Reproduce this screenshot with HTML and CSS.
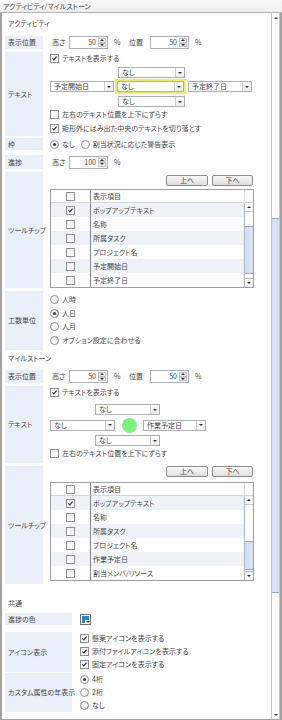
FILE: index.html
```html
<!DOCTYPE html>
<html lang="ja">
<head>
    <meta charset="UTF-8">
    <meta name="viewport" content="width=device-width, initial-scale=1.0">
    <title>アクティビティ/マイルストーン</title>
    <link rel="stylesheet" href="styles.css">
</head>
<body>
    <div class="window">
        <div class="titlebar">アクティビティ/マイルストーン</div>
        <div class="frame">
            <div class="content">

                <!-- Activity -->
                <div class="sect sect-act">アクティビティ</div>

                <div class="row h-pos">
                    <div class="label">表示位置</div>
                    <div class="body inline">
                        <span class="cap">高さ</span>
                        <span class="spin"><span class="val">50</span><span class="spin-btns"><span class="sb"><i class="tri-up"></i></span><span class="sb"><i class="tri-down"></i></span></span></span>
                        <span class="unit">%</span>
                        <span class="cap cap2">位置</span>
                        <span class="spin"><span class="val">50</span><span class="spin-btns"><span class="sb"><i class="tri-up"></i></span><span class="sb"><i class="tri-down"></i></span></span></span>
                        <span class="unit">%</span>
                    </div>
                </div>

                <div class="row h-text1">
                    <div class="label">テキスト</div>
                    <div class="body">
                        <div class="check"><span class="box on"><svg viewBox="0 0 9 9"><path d="M1.8 4.4 L3.6 6.3 L7.2 2.2" /></svg></span>テキストを表示する</div>
                        <div class="combos act-combos">
                            <div class="combo-line indent-act"><span class="combo w67"><span class="txt">なし</span><span class="arr"><i class="tri-down"></i></span></span></div>
                            <div class="combo-line mid-act">
                                <span class="combo w64"><span class="txt">予定開始日</span><span class="arr"><i class="tri-down"></i></span></span>
                                <span class="combo w67 focus"><span class="txt">なし</span><span class="arr"><i class="tri-down"></i></span></span>
                                <span class="combo w64"><span class="txt">予定終了日</span><span class="arr"><i class="tri-down"></i></span></span>
                            </div>
                            <div class="combo-line indent-act low"><span class="combo w67"><span class="txt">なし</span><span class="arr"><i class="tri-down"></i></span></span></div>
                        </div>
                        <div class="check"><span class="box"></span>左右のテキスト位置を上下にずらす</div>
                        <div class="check"><span class="box on"><svg viewBox="0 0 9 9"><path d="M1.8 4.4 L3.6 6.3 L7.2 2.2" /></svg></span>矩形外にはみ出た中央のテキストを切り落とす</div>
                    </div>
                </div>

                <div class="row h-waku">
                    <div class="label">枠</div>
                    <div class="body inline">
                        <span class="radio on"></span><span class="rtext">なし</span>
                        <span class="radio"></span><span class="rtext">割当状況に応じた警告表示</span>
                    </div>
                </div>

                <div class="row h-prog">
                    <div class="label">進捗</div>
                    <div class="body inline">
                        <span class="cap">高さ</span>
                        <span class="spin"><span class="val">100</span><span class="spin-btns"><span class="sb"><i class="tri-up"></i></span><span class="sb"><i class="tri-down"></i></span></span></span>
                        <span class="unit">%</span>
                    </div>
                </div>

                <div class="row h-tip1">
                    <div class="label">ツールチップ</div>
                    <div class="body tips tips-act">
                        <div class="btns"><span class="btn">上へ</span><span class="btn">下へ</span></div>
                        <div class="grid">
                            <div class="gh gcb"><span class="box"></span></div>
                            <div class="gh gtx">表示項目</div>
                            <div class="gh gcorner"></div>
                            <div class="gcb alt"><span class="box on"><svg viewBox="0 0 9 9"><path d="M1.8 4.4 L3.6 6.3 L7.2 2.2" /></svg></span></div>
                            <div class="gtx alt">ポップアップテキスト</div>
                            <div class="gscroll">
                                <span class="gs-btn"><i class="tri-up"></i></span>
                                <span class="gs-track"><span class="gs-thumb thumb-act"></span></span>
                                <span class="gs-btn"><i class="tri-down"></i></span>
                            </div>
                            <div class="gcb"><span class="box"></span></div><div class="gtx">名称</div>
                            <div class="gcb alt"><span class="box"></span></div><div class="gtx alt">所属タスク</div>
                            <div class="gcb"><span class="box"></span></div><div class="gtx">プロジェクト名</div>
                            <div class="gcb alt"><span class="box"></span></div><div class="gtx alt">予定開始日</div>
                            <div class="gcb"><span class="box"></span></div><div class="gtx">予定終了日</div>
                        </div>
                    </div>
                </div>

                <div class="row h-unit">
                    <div class="label">工数単位</div>
                    <div class="body radios">
                        <div class="rline"><span class="radio"></span><span class="rtext">人時</span></div>
                        <div class="rline"><span class="radio on"></span><span class="rtext">人日</span></div>
                        <div class="rline"><span class="radio"></span><span class="rtext">人月</span></div>
                        <div class="rline"><span class="radio"></span><span class="rtext">オプション設定に合わせる</span></div>
                    </div>
                </div>

                <!-- Milestone -->
                <div class="sect sect-ms">マイルストーン</div>

                <div class="row h-pos">
                    <div class="label">表示位置</div>
                    <div class="body inline">
                        <span class="cap">高さ</span>
                        <span class="spin"><span class="val">50</span><span class="spin-btns"><span class="sb"><i class="tri-up"></i></span><span class="sb"><i class="tri-down"></i></span></span></span>
                        <span class="unit">%</span>
                        <span class="cap cap2">位置</span>
                        <span class="spin"><span class="val">50</span><span class="spin-btns"><span class="sb"><i class="tri-up"></i></span><span class="sb"><i class="tri-down"></i></span></span></span>
                        <span class="unit">%</span>
                    </div>
                </div>

                <div class="row h-text2">
                    <div class="label">テキスト</div>
                    <div class="body">
                        <div class="check"><span class="box on"><svg viewBox="0 0 9 9"><path d="M1.8 4.4 L3.6 6.3 L7.2 2.2" /></svg></span>テキストを表示する</div>
                        <div class="combos ms-combos">
                            <div class="combo-line indent-ms"><span class="combo w65"><span class="txt">なし</span><span class="arr"><i class="tri-down"></i></span></span></div>
                            <div class="combo-line mid-ms">
                                <span class="combo w65"><span class="txt">なし</span><span class="arr"><i class="tri-down"></i></span></span>
                                <span class="pointer"></span>
                                <span class="combo w63"><span class="txt">作業予定日</span><span class="arr"><i class="tri-down"></i></span></span>
                            </div>
                            <div class="combo-line indent-ms"><span class="combo w65"><span class="txt">なし</span><span class="arr"><i class="tri-down"></i></span></span></div>
                        </div>
                        <div class="check"><span class="box"></span>左右のテキスト位置を上下にずらす</div>
                    </div>
                </div>

                <div class="row h-tip2">
                    <div class="label">ツールチップ</div>
                    <div class="body tips tips-ms">
                        <div class="btns"><span class="btn">上へ</span><span class="btn">下へ</span></div>
                        <div class="grid">
                            <div class="gh gcb"><span class="box"></span></div>
                            <div class="gh gtx">表示項目</div>
                            <div class="gh gcorner"></div>
                            <div class="gcb alt"><span class="box on"><svg viewBox="0 0 9 9"><path d="M1.8 4.4 L3.6 6.3 L7.2 2.2" /></svg></span></div>
                            <div class="gtx alt">ポップアップテキスト</div>
                            <div class="gscroll">
                                <span class="gs-btn"><i class="tri-up"></i></span>
                                <span class="gs-track"><span class="gs-thumb thumb-ms"></span></span>
                                <span class="gs-btn"><i class="tri-down"></i></span>
                            </div>
                            <div class="gcb"><span class="box"></span></div><div class="gtx">名称</div>
                            <div class="gcb alt"><span class="box"></span></div><div class="gtx alt">所属タスク</div>
                            <div class="gcb"><span class="box"></span></div><div class="gtx">プロジェクト名</div>
                            <div class="gcb alt"><span class="box"></span></div><div class="gtx alt">作業予定日</div>
                            <div class="gcb"><span class="box"></span></div><div class="gtx">割当メンバ/リソース</div>
                        </div>
                    </div>
                </div>

                <!-- Common -->
                <div class="sect sect-common">共通</div>

                <div class="row wide h-color">
                    <div class="label">進捗の色</div>
                    <div class="body inline">
                        <span class="swatch"><span class="swatch-fill"></span><span class="swatch-drop"><i class="tri-down"></i></span></span>
                    </div>
                </div>

                <div class="row wide h-icons">
                    <div class="label">アイコン表示</div>
                    <div class="body lines">
                        <div class="check"><span class="box on"><svg viewBox="0 0 9 9"><path d="M1.8 4.4 L3.6 6.3 L7.2 2.2" /></svg></span>懸案アイコンを表示する</div>
                        <div class="check"><span class="box on"><svg viewBox="0 0 9 9"><path d="M1.8 4.4 L3.6 6.3 L7.2 2.2" /></svg></span>添付ファイルアイコンを表示する</div>
                        <div class="check"><span class="box on"><svg viewBox="0 0 9 9"><path d="M1.8 4.4 L3.6 6.3 L7.2 2.2" /></svg></span>固定アイコンを表示する</div>
                    </div>
                </div>

                <div class="row wide h-year">
                    <div class="label">カスタム属性の年表示</div>
                    <div class="body lines">
                        <div class="rline"><span class="radio on"></span><span class="rtext">4桁</span></div>
                        <div class="rline"><span class="radio"></span><span class="rtext">2桁</span></div>
                        <div class="rline"><span class="radio"></span><span class="rtext">なし</span></div>
                    </div>
                </div>

            </div>

            <!-- Window scrollbar -->
            <div class="vscroll">
                <span class="vs-btn"><i class="tri-up"></i></span>
                <span class="vs-track"><span class="vs-thumb"></span></span>
                <span class="vs-btn"><i class="tri-down"></i></span>
            </div>
        </div>
    </div>
</body>
</html>
```

FILE: styles.css
```css
* {
    box-sizing: border-box;
}
body {
    margin: 0;
    font-family: "Noto Sans CJK JP", "Noto Sans", sans-serif;
    font-size: 7px;
    line-height: 1;
    color: #444;
    font-feature-settings: "palt";
    background: #fff;
}
.window {
    width: 282px;
    height: 720px;
    display: flex;
    flex-direction: column;
    overflow: hidden;
}
.titlebar {
    height: 13px;
    flex: none;
    display: flex;
    align-items: center;
    padding-left: 3px;
    background: linear-gradient(#fbfbfb, #ececec);
    border-bottom: 1px solid #b4b4b4;
    color: #444;
}
.frame {
    flex: 1;
    display: flex;
    border-left: 2px solid #a3a3a3;
    border-right: 2px solid #a3a3a3;
    border-bottom: 1px solid #a3a3a3;
    min-height: 0;
}
.content {
    flex: 1;
    overflow: hidden;
}

/* section titles */
.sect {
    display: flex;
    align-items: center;
    padding-left: 6px;
}
.sect-act { height: 20px; }
.sect-ms { height: 17px; }
.sect-common { height: 16px; margin-top: 11px; }

/* rows */
.row {
    display: flex;
    margin-top: 3px;
}
.label {
    width: 38px;
    margin-left: 3px;
    padding-left: 3px;
    background: #e9f0fa;
    display: flex;
    align-items: center;
    white-space: nowrap;
    flex: none;
}
.row.wide .label {
    width: 67px;
}
.body {
    margin-left: 7px;
    display: flex;
    flex-direction: column;
}
.row.wide .body {
    margin-left: 8px;
}
.body.inline {
    flex-direction: row;
    align-items: center;
}

.h-pos { height: 13px; }
.h-text1 { height: 84px; }
.h-waku { height: 12px; margin-top: 2px; }
.h-prog { height: 14px; margin-top: 5px; }
.h-tip1 { height: 116px; }
.h-unit { height: 59px; }
.h-text2 { height: 77px; }
.h-tip2 { height: 118px; }
.h-color { height: 12px; margin-top: 2px; }
.h-icons { height: 40px; margin-top: 7px; }
.h-year { height: 39px; margin-top: 1px; }

/* spin boxes */
.cap {
    width: 17px;
    margin-left: 2px;
}
.cap2 {
    width: 21px;
    margin-left: 0;
}
.unit {
    width: 15px;
    margin-left: 6px;
}
.spin {
    width: 39px;
    height: 13px;
    border: 1px solid #abadb3;
    display: flex;
    background: #fff;
}
.spin .val {
    flex: 1;
    text-align: right;
    padding-right: 2px;
    display: flex;
    align-items: center;
    justify-content: flex-end;
}
.spin-btns {
    width: 9px;
    display: flex;
    flex-direction: column;
    padding: 1px 1px 1px 0;
}
.sb {
    flex: 1;
    border: 1px solid #c3c3c3;
    background: linear-gradient(#fafafa, #e8e8e8);
    display: flex;
    align-items: center;
    justify-content: center;
}
.tri-up,
.tri-down {
    display: block;
    width: 0;
    height: 0;
    border-left: 2px solid transparent;
    border-right: 2px solid transparent;
}
.tri-up {
    border-bottom: 2px solid #333;
}
.tri-down {
    border-top: 2px solid #333;
}

/* check boxes and radios */
.check {
    display: flex;
    align-items: center;
    height: 13px;
    white-space: nowrap;
}
.check + .check {
    margin-top: 1px;
}
.box {
    width: 9px;
    height: 9px;
    border: 1px solid #8e8f8f;
    background: linear-gradient(#f0f0f0, #fff);
    margin-right: 3px;
    flex: none;
    display: inline-flex;
}
.box svg {
    width: 7px;
    height: 7px;
}
.box svg path {
    fill: none;
    stroke: #2a2a2a;
    stroke-width: 1.4;
}
.radio {
    width: 9px;
    height: 9px;
    border: 1px solid #8e8f8f;
    border-radius: 50%;
    background: linear-gradient(#f0f0f0, #fff);
    flex: none;
    display: inline-flex;
    align-items: center;
    justify-content: center;
}
.radio.on::after {
    content: "";
    width: 3px;
    height: 3px;
    border-radius: 50%;
    background: #333;
}
.rtext {
    margin-left: 3px;
    margin-right: 6px;
    white-space: nowrap;
}
.radios {
    padding-top: 2px;
}
.rline {
    height: 13.5px;
    display: flex;
    align-items: center;
}
.lines .check,
.lines .rline {
    height: 13px;
    margin-top: 0;
}

/* combos */
.combos {
    display: flex;
    flex-direction: column;
}
.act-combos {
    margin-top: 2px;
    margin-bottom: 1px;
}
.ms-combos {
    margin-top: 5px;
    margin-bottom: 1px;
}
.combo-line {
    display: flex;
    align-items: center;
}
.combo {
    height: 11px;
    border: 1px solid #abadb3;
    background: #fff;
    display: flex;
    flex: none;
}
.combo .txt {
    flex: 1;
    padding-left: 3px;
    display: flex;
    align-items: center;
    white-space: nowrap;
}
.combo .arr {
    width: 9px;
    border-left: 1px solid #cfcfcf;
    background: linear-gradient(#fdfdfd, #ececec);
    display: flex;
    align-items: center;
    justify-content: center;
}
.combo.focus {
    outline: 2px solid #f1ea6c;
    background: #fffff2;
}
.w63 { width: 63px; }
.w64 { width: 64px; }
.w65 { width: 65px; }
.w67 { width: 67px; }
.indent-act { padding-left: 68px; }
.mid-act {
    margin-top: 3px;
    gap: 3px;
}
.mid-act .combo:last-child {
    margin-left: 1px;
}
.low { margin-top: 4px; }
.indent-ms { padding-left: 45px; }
.mid-ms {
    height: 16px;
    margin: 2px 0 2px;
}
.pointer {
    width: 15px;
    height: 15px;
    border-radius: 50%;
    background: #7df07b;
    margin: 0 6px 0 7px;
    flex: none;
}

/* tooltip lists */
.tips {
    width: 204px;
}
.tips-act { padding-top: 3px; }
.tips-ms { padding-top: 0; }
.btns {
    display: flex;
    justify-content: flex-end;
    gap: 4px;
    padding-right: 1px;
}
.btn {
    width: 42px;
    height: 11px;
    border: 1px solid #8a8a8a;
    border-radius: 2px;
    background: linear-gradient(#f8f8f8, #dedede);
    display: flex;
    align-items: center;
    justify-content: center;
}
.btn + .btn { width: 41px; }
.tips-act .grid { margin-top: 3px; }
.tips-ms .grid { margin-top: 5px; }
.grid {
    display: grid;
    grid-template-columns: 40px 1fr 9px;
    grid-template-rows: 13px repeat(6, 14px);
    border: 1px solid #9ba1a9;
}
.gcb {
    border-right: 1px solid #7f8690;
    display: flex;
    align-items: center;
    justify-content: center;
}
.gcb .box {
    margin-right: 0;
}
.gtx {
    display: flex;
    align-items: center;
    padding-left: 2px;
    white-space: nowrap;
    overflow: hidden;
}
.gh {
    border-bottom: 1px solid #d5d9df;
    background: #fff;
}
.gcorner {
    border-left: 1px solid #d5d9df;
}
.alt {
    background: #eef3fa;
}
.gscroll {
    grid-column: 3;
    grid-row: 2 / span 6;
    border-left: 1px solid #a9b3c2;
    display: flex;
    flex-direction: column;
    background: #fff;
}
.gs-btn {
    height: 9px;
    flex: none;
    display: flex;
    align-items: center;
    justify-content: center;
    border-bottom: 1px solid #c5ccd6;
}
.gs-btn:last-child {
    border-bottom: none;
    border-top: 1px solid #a9b3c2;
}
.gs-track {
    flex: 1;
    display: flex;
    flex-direction: column;
}
.gs-thumb {
    display: block;
    background: #d5e2f5;
    border-top: 1px solid #98a9c4;
    border-bottom: 1px solid #98a9c4;
}
.thumb-act {
    margin-top: 14px;
    height: 48px;
}
.thumb-ms {
    margin-top: 36px;
    height: 29px;
}

/* colour swatch */
.swatch {
    width: 11px;
    height: 11px;
    border: 1px solid #707070;
    padding: 1px;
    background: #fff;
    position: relative;
}
.swatch-fill {
    display: block;
    width: 100%;
    height: 100%;
    background: #2d80d4;
}
.swatch-drop {
    position: absolute;
    right: 0;
    bottom: 0;
    width: 5px;
    height: 4px;
    background: #fff;
    display: flex;
    align-items: center;
    justify-content: center;
}

/* window scrollbar */
.vscroll {
    width: 9px;
    flex: none;
    display: flex;
    flex-direction: column;
    border-left: 1px solid #c6c6c6;
    border-right: 1px solid #c6c6c6;
    background: #fff;
}
.vs-btn {
    height: 9px;
    flex: none;
    display: flex;
    align-items: center;
    justify-content: center;
}
.vs-track {
    flex: 1;
    display: flex;
    flex-direction: column;
}
.vs-thumb {
    display: block;
    margin-top: 196px;
    height: 375px;
    background: #d5e2f5;
    border-top: 1px solid #98a9c4;
    border-bottom: 1px solid #98a9c4;
}
```
